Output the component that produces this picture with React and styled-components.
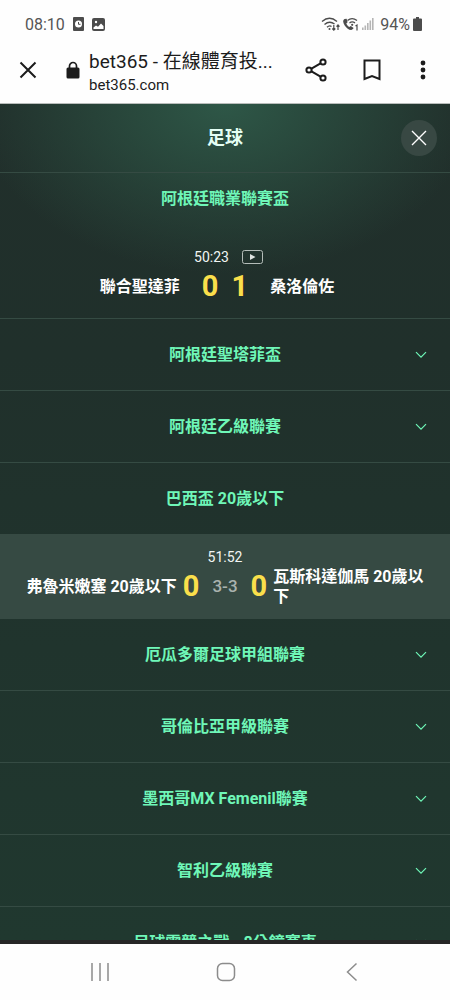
import React from "react";
import styled, { createGlobalStyle } from "styled-components";

const GlobalStyle = createGlobalStyle`
    * {
        box-sizing: border-box;
    }

    body {
        margin: 0;
        font-family: Roboto, "Noto Sans CJK TC", sans-serif;
        background: #fefefe;
    }

    button {
        border: none;
        padding: 0;
        background: none;
        font: inherit;
        color: inherit;
        cursor: pointer;
    }
`;

const Screen = styled.div`
    height: 100vh;
    display: flex;
    flex-direction: column;
`;

const StatusBar = styled.div`
    display: flex;
    justify-content: space-between;
    align-items: center;
    height: 48px;
    padding: 0 28px 0 25px;
    flex-shrink: 0;
    font-size: 16px;
    color: #555;
`;

const StatusGroup = styled.div`
    display: flex;
    align-items: center;
    gap: ${props => props.$gap}px;

    svg {
        display: block;
    }
`;

const BrowserBar = styled.header`
    display: flex;
    align-items: center;
    height: 56px;
    padding: 0 11px 12px 12px;
    flex-shrink: 0;
    border-bottom: 1px solid #b9bdbb;
    color: #1c1c1c;
`;

const IconButton = styled.button`
    display: flex;
    justify-content: center;
    align-items: center;
    width: 32px;
    height: 32px;
    flex-shrink: 0;
`;

const LockIcon = styled.svg`
    margin: 0 9px 0 22px;
    flex-shrink: 0;
`;

const Address = styled.div`
    flex: 1;
    min-width: 0;
    padding-top: 4px;
`;

const PageTitle = styled.div`
    font-size: 19px;
    line-height: 26px;
    overflow: hidden;
    white-space: nowrap;
    text-overflow: ellipsis;
`;

const PageHost = styled.div`
    font-size: 15px;
    line-height: 20px;
`;

const Tools = styled.div`
    display: flex;
    gap: 24px;
    margin-left: 23px;

    button:last-child {
        margin-left: -5px;
    }
`;

const Page = styled.main`
    flex: 1;
    min-height: 0;
    display: flex;
    flex-direction: column;
    overflow: hidden;
    border-bottom: 4px solid #262626;
    background:
        radial-gradient(ellipse 250px 170px at 50% 0, #2e5747 0%, rgba(44, 82, 67, 0.75) 35%, rgba(35, 58, 49, 0) 100%),
        linear-gradient(#212f2b, #20302b 30%, #20382f);
`;

const SportHeader = styled.div`
    display: grid;
    grid-template-columns: 1fr auto 1fr;
    align-items: center;
    height: 69px;
    padding: 0 13px;
    flex-shrink: 0;
    border-bottom: 1px solid #354b43;
`;

const SportTitle = styled.h1`
    grid-column: 2;
    margin: 0;
    padding-bottom: 4px;
    font-size: 18px;
    font-weight: 700;
    color: #e4fff4;
`;

const CloseButton = styled.button`
    display: flex;
    justify-content: center;
    align-items: center;
    justify-self: end;
    width: 36px;
    height: 36px;
    border-radius: 50%;
    background: #384843;
`;

const List = styled.div`
    flex: 1;
    min-height: 0;
    overflow: hidden;
`;

const League = styled.button`
    display: grid;
    grid-template-columns: 1fr auto 1fr;
    align-items: center;
    width: 100%;
    height: ${props => (props.$first ? 61 : props.$open ? 71 : 72)}px;
    padding: 0 22px ${props => (props.$first ? 10 : 0)}px;
    border-bottom: ${props => (props.$open ? "none" : "1px solid #354b43")};
    font-size: 16px;
    font-weight: 700;
    color: #6ff7b8;
`;

const LeagueName = styled.span`
    grid-column: 2;
    padding-bottom: 4px;
`;

const Chevron = styled.svg`
    justify-self: end;
`;

const Match = styled.a`
    display: block;
    height: 85px;
    padding-top: 13px;
    border-bottom: ${props => (props.$highlight ? "none" : "1px solid #354b43")};
    background: ${props => (props.$highlight ? "#364a43" : "transparent")};
    color: #fff;
    text-decoration: none;
`;

const Clock = styled.div`
    display: grid;
    grid-template-columns: 1fr auto 1fr;
    align-items: center;
    height: 20px;
    margin-right: ${props => (props.$video ? 27 : 0)}px;
    font-size: 14px;
    color: #f1f5f3;
`;

const ClockTime = styled.span`
    grid-column: 2;
    margin: 0 ${props => (props.$video ? 13 : 0)}px;
`;

const Teams = styled.div`
    display: grid;
    grid-template-columns: 1fr auto 1fr;
    align-items: center;
    height: 40px;
    padding: 0 22px;
`;

const Team = styled.span`
    font-size: 16px;
    line-height: 20px;
    font-weight: 700;
    text-align: ${props => (props.$home ? "right" : "left")};
`;

const Scores = styled.span`
    display: flex;
    align-items: center;
    gap: 13px;
    margin: 0 ${props => (props.$wide ? 6 : 22)}px;
    padding-bottom: 2px;
    font-size: 29px;
    font-weight: 700;
    color: #fadf4b;
`;

const Corners = styled.span`
    font-size: 17px;
    font-weight: 500;
    color: #a9b2ae;
`;

const NavBar = styled.nav`
    display: flex;
    justify-content: space-between;
    align-items: center;
    height: 56px;
    padding: 0 82px 0 84px;
    flex-shrink: 0;
`;

const leagues = [
    {
        name: "阿根廷職業聯賽盃",
        match: { home: "聯合聖達菲", away: "桑洛倫佐", time: "50:23", score: [0, 1], video: true }
    },
    { name: "阿根廷聖塔菲盃" },
    { name: "阿根廷乙級聯賽" },
    {
        name: "巴西盃 20歲以下",
        match: { home: "弗魯米嫩塞 20歲以下", away: "瓦斯科達伽馬 20歲以下", time: "51:52", score: [0, 0], corners: "3-3" }
    },
    { name: "厄瓜多爾足球甲組聯賽" },
    { name: "哥倫比亞甲級聯賽" },
    { name: "墨西哥MX Femenil聯賽" },
    { name: "智利乙級聯賽" },
    { name: "足球電競之戰 - 8分鐘賽事" }
];

const VideoIcon = () => (
    <svg width="21" height="14" viewBox="0 0 21 14">
        <rect x="0.5" y="0.5" width="20" height="13" rx="2" fill="none" stroke="#b4bdb9" />
        <path d="M8 4l5.5 3L8 10z" fill="#dfe4e2" />
    </svg>
);

const StatusIcons = () => (
    <svg width="56" height="16" viewBox="0 0 56 16" fill="none" stroke="#4c4c4c" strokeWidth="1.4">
        <path d="M1 5.5Q8.5 -0.8 16 5.5M3.5 8.5Q8.5 4.2 13.5 8M6 11.2Q8.5 9 10.5 10.5" />
        <circle cx="8.5" cy="13" r="1" fill="#4c4c4c" stroke="none" />
        <path d="M12.8 9v5M11.3 12.5l1.5 1.7 1.5-1.7M17 14V9M15.500 10.700L17 9l1.500 1.700" strokeWidth="1.2" />
        <path d="M23.500 3c-1.900 1-1.700 3.500.2 6.400 1.800 2.700 4.200 4.400 6.400 4.500 1 0 2-.7 2.500-1.800l-2.800-2.100-1.600 1c-1.300-.8-2.300-2.100-2.900-3.500l1.300-1.300-1-3.500z" fill="#4c4c4c" stroke="none" />
        <path d="M26.500 4.500Q31 0.800 36 4.500M28.500 6.900Q31.200 4.900 34 6.900" strokeWidth="1.3" />
        <circle cx="31.200" cy="8.800" r="1.100" fill="#4c4c4c" stroke="none" />
        <path d="M34.500 10l1.500-1v5.500" strokeWidth="1.2" />
        <path d="M41.800 14v-2.500M44.300 14V9.500M46.800 14V7M49.300 14V4.500M51.800 14V2" stroke="#b5b5b5" strokeWidth="1.6" />
    </svg>
);

const ChevronIcon = () => (
    <Chevron width="14" height="10" viewBox="0 0 14 10" fill="none" stroke="currentColor" strokeWidth="1.2">
        <path d="M2 2.2l5 5 5-5" />
    </Chevron>
);

const MatchRow = ({ match }) => (
    <Match href="#match" $highlight={!match.video}>
        <Clock $video={match.video}>
            <ClockTime $video={match.video}>{match.time}</ClockTime>
            {match.video && <VideoIcon />}
        </Clock>
        <Teams>
            <Team $home>{match.home}</Team>
            <Scores $wide={!!match.corners}>
                <span>{match.score[0]}</span>
                {match.corners && <Corners>{match.corners}</Corners>}
                <span>{match.score[1]}</span>
            </Scores>
            <Team>{match.away}</Team>
        </Teams>
    </Match>
);

const App = () => (
    <Screen>
        <GlobalStyle />

        <StatusBar>
            <StatusGroup $gap={8}>
                <span>08:10</span>
                <svg width="11" height="14" viewBox="0 0 11 14">
                    <rect width="11" height="14" rx="1" fill="#4c4c4c" />
                    <circle cx="5.5" cy="7" r="3.5" fill="#fff" />
                    <path d="M5.5 5v2.3H7.5" fill="none" stroke="#4c4c4c" />
                </svg>
                <svg width="13" height="13" viewBox="0 0 13 13">
                    <rect width="13" height="13" rx="2" fill="#4c4c4c" />
                    <circle cx="4" cy="4" r="1.2" fill="#fff" />
                    <path d="M1.5 9.5L4 7.5l2 1.3 3-3.3 2.5 2.5v3h-10z" fill="#fff" />
                </svg>
            </StatusGroup>
            <StatusGroup $gap={3}>
                <StatusIcons />
                <span>94%</span>
                <svg width="9" height="14" viewBox="0 0 9 14">
                    <path d="M3 0h3v1.5h2q1 0 1 1V13q0 1-1 1H1q-1 0-1-1V2.5q0-1 1-1h2z" fill="#4c4c4c" />
                </svg>
            </StatusGroup>
        </StatusBar>

        <BrowserBar>
            <IconButton aria-label="關閉分頁">
                <svg width="18" height="18" viewBox="0 0 18 18" stroke="currentColor" strokeWidth="2">
                    <path d="M1.5 1.5l15 15M16.5 1.5l-15 15" />
                </svg>
            </IconButton>
            <LockIcon width="14" height="18" viewBox="0 0 14 18">
                <path d="M3.5 8V5a3.5 3.5 0 0 1 7 0v3" fill="none" stroke="#1c1c1c" strokeWidth="1.7" />
                <rect x="0.5" y="6.5" width="13" height="11" rx="1.5" fill="#1c1c1c" />
            </LockIcon>
            <Address>
                <PageTitle>bet365 - 在線體育投...</PageTitle>
                <PageHost>bet365.com</PageHost>
            </Address>
            <Tools>
                <IconButton aria-label="分享">
                    <svg width="22" height="24" viewBox="0 0 22 24" fill="none" stroke="currentColor" strokeWidth="2">
                        <path d="M6.500 10.700l9-5.400M6.500 13.300l9 5.400" />
                        <circle cx="4" cy="12" r="2.600" />
                        <circle cx="18" cy="4" r="2.600" />
                        <circle cx="18" cy="20" r="2.600" />
                    </svg>
                </IconButton>
                <IconButton aria-label="書籤">
                    <svg width="18" height="22" viewBox="0 0 18 22" fill="none" stroke="currentColor" strokeWidth="2">
                        <path d="M1.500 1.500h15v18.500L9 17 1.500 20z" />
                    </svg>
                </IconButton>
                <IconButton aria-label="更多">
                    <svg width="6" height="20" viewBox="0 0 6 20" fill="currentColor">
                        <circle cx="3" cy="3" r="2.400" />
                        <circle cx="3" cy="10" r="2.400" />
                        <circle cx="3" cy="17" r="2.400" />
                    </svg>
                </IconButton>
            </Tools>
        </BrowserBar>

        <Page>
            <SportHeader>
                <SportTitle>足球</SportTitle>
                <CloseButton aria-label="關閉">
                    <svg width="16" height="16" viewBox="0 0 16 16" stroke="#fff" strokeWidth="1.4">
                        <path d="M1 1l14 14M15 1L1 15" />
                    </svg>
                </CloseButton>
            </SportHeader>
            <List>
                {leagues.map((league, index) => (
                    <React.Fragment key={league.name}>
                        <League $first={index === 0} $open={!!league.match}>
                            <LeagueName>{league.name}</LeagueName>
                            {!league.match && <ChevronIcon />}
                        </League>
                        {league.match && <MatchRow match={league.match} />}
                    </React.Fragment>
                ))}
            </List>
        </Page>

        <NavBar>
            <IconButton aria-label="最近使用">
                <svg width="18" height="18" viewBox="0 0 18 18" stroke="#8c8c8c" strokeWidth="1.5">
                    <path d="M1 0v18M9 0v18M17 0v18" />
                </svg>
            </IconButton>
            <IconButton aria-label="主畫面">
                <svg width="20" height="20" viewBox="0 0 20 20" fill="none" stroke="#8c8c8c" strokeWidth="1.5">
                    <rect x="1.5" y="1.5" width="17" height="17" rx="5" />
                </svg>
            </IconButton>
            <IconButton aria-label="返回">
                <svg width="12" height="20" viewBox="0 0 12 20" fill="none" stroke="#8c8c8c" strokeWidth="1.5">
                    <path d="M10.5 1.500L1.500 10l9 8.500" />
                </svg>
            </IconButton>
        </NavBar>
    </Screen>
);

export default App;
